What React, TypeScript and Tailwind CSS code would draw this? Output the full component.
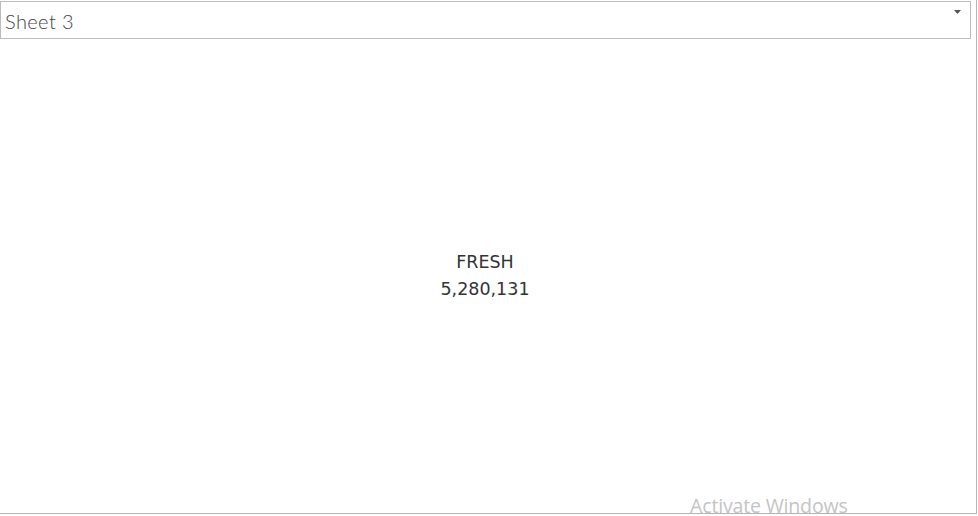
export default function App() {
  return (
    <div className="relative w-[978px] h-[516px] bg-white overflow-hidden font-['Open_Sans',sans-serif]">
      <div className="w-[977px] h-[514px] border-r border-b border-[#b4b4b4] flex flex-col">
        <div className="mt-px w-[971px] h-[38px] border border-[#bdbdbd] flex items-center justify-between pl-[4px] pr-[9px]">
          <span className="mt-[2px] text-[20px] font-light text-[#444] font-['Lato',sans-serif] tracking-[0.4px]">Sheet 3</span>
          <svg width="7" height="4" viewBox="0 0 7 4" className="mb-[16px]">
            <path d="M0 0H7L3.5 4Z" fill="#555" />
          </svg>
        </div>
        <div className="flex-1 flex flex-col items-center justify-center pt-[0px] pr-[6px] text-[17.5px] leading-[27px] text-[#333] font-['DejaVu_Sans',sans-serif]">
          <span>FRESH</span>
          <span>5,280,131</span>
        </div>
      </div>
      <span className="absolute left-[690px] top-[491px] text-[19.6px] text-[#c4c4c4] font-['Open_Sans',sans-serif] tracking-[-0.2px]">
        Activate Windows
      </span>
    </div>
  );
}
